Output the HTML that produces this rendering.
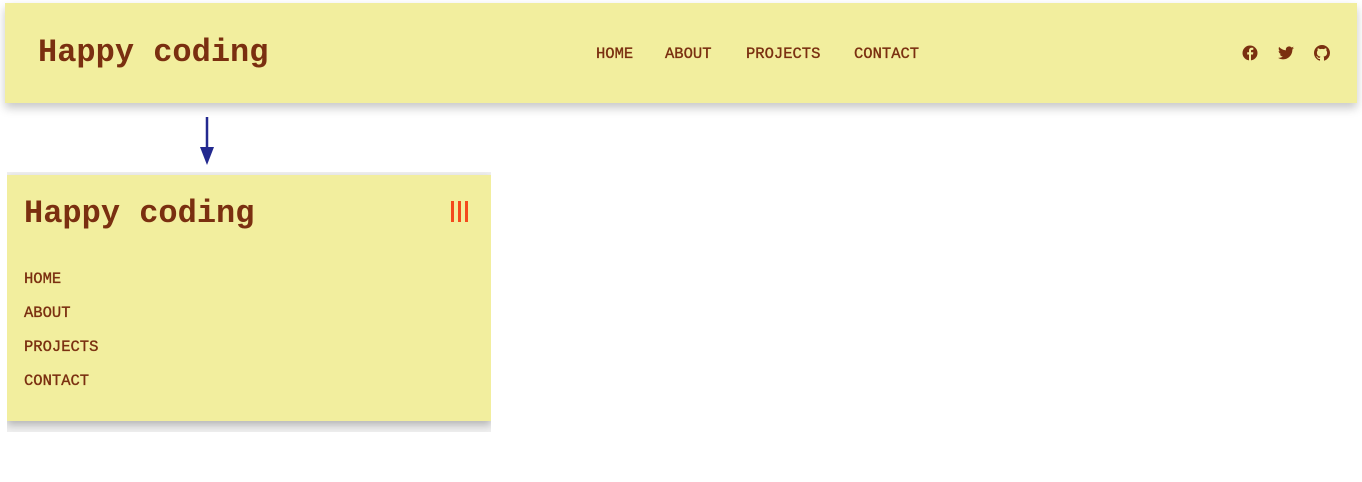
<!DOCTYPE html>
<html><head><meta charset="utf-8"><style>
body{margin:0;width:1362px;height:482px;background:#fff;position:relative;overflow:hidden;font-family:"Liberation Mono",monospace;color:#7a2f10}
.top{position:absolute;left:5px;top:3px;width:1352px;height:100px;background:#f2ee9e;box-shadow:0 5px 9px rgba(0,0,0,.22)}
.logo{position:absolute;font-weight:bold;font-size:32px;line-height:32px}
.nav{position:absolute;font-size:15.5px;-webkit-text-stroke:.35px #7a2f10;line-height:16px}
.wrap{position:absolute;left:7px;top:172px;width:484px;height:260px;background:#f0f0f0;overflow:hidden}
.panel{position:absolute;left:0;top:3px;width:484px;height:246px;background:#f2ee9e;box-shadow:0 4px 8px rgba(0,0,0,.25)}
.bar{position:absolute;top:201px;width:3px;height:21px;background:#f44a1c}
</style></head><body>
<div class="top">
<div class="logo" style="left:33px;top:34px">Happy coding</div>
<div class="nav" style="left:591px;top:43px">HOME</div>
<div class="nav" style="left:660px;top:43px">ABOUT</div>
<div class="nav" style="left:741px;top:43px">PROJECTS</div>
<div class="nav" style="left:849px;top:43px">CONTACT</div>
<svg style="position:absolute;left:1237px;top:42px" width="16" height="16" viewBox="0 0 16 16"><circle cx="8" cy="8" r="7.5" fill="#7a2f10"/><path d="M9 16V9.5h2l.3-2.3H9V6c0-.7.2-1.1 1.1-1.1h1.2V2.9C11 2.8 10.4 2.8 9.8 2.8 8.2 2.8 7 3.8 7 5.6v1.6H5.2v2.3H7V16z" fill="#f2ee9e"/></svg>
<svg style="position:absolute;left:1273px;top:43px" width="16" height="14" viewBox="0 0 24 20"><path d="M24 2.4c-.9.4-1.8.6-2.8.8 1-.6 1.8-1.6 2.2-2.7-1 .6-2 1-3.1 1.2A4.9 4.9 0 0 0 11.9 6C7.8 5.8 4.2 3.9 1.7.9c-1.3 2.300-.6 5.100 1.500 6.600-.8 0-1.600-.2-2.200-.6 0 2.400 1.700 4.400 3.900 4.800-.7.2-1.500.2-2.200.1.6 2 2.400 3.400 4.600 3.400A9.900 9.900 0 0 1 0 17.300 14 14 0 0 0 7.500 19.500c9.100 0 14-7.500 14-14v-.6c1-.7 1.800-1.600 2.500-2.500z" fill="#7a2f10"/></svg>
<svg style="position:absolute;left:1309px;top:42px" width="16" height="16" viewBox="0 0 16 16"><path fill="#7a2f10" d="M8 0C3.58 0 0 3.58 0 8c0 3.54 2.29 6.53 5.47 7.59.4.07.55-.17.55-.38v-1.33c-2.23.48-2.7-1.07-2.7-1.07-.36-.92-.89-1.17-.89-1.17-.73-.5.06-.49.06-.49.8.06 1.23.83 1.23.83.71 1.22 1.87.87 2.33.66.07-.52.28-.87.51-1.07-1.78-.2-3.64-.89-3.64-3.950 0-.87.31-1.590.82-2.150-.08-.2-.36-1.020.08-2.120 0 0 .67-.21 2.200.82A7.6 7.6 0 0 1 8 3.870c.68 0 1.360.09 2 .27 1.530-1.040 2.200-.82 2.200-.82.44 1.100.16 1.920.08 2.120.51.56.82 1.270.82 2.150 0 3.070-1.870 3.750-3.650 3.950.29.25.54.73.54 1.480v2.200c0 .21.15.46.55.38A8 8 0 0 0 16 8c0-4.420-3.580-8-8-8z"/></svg>
</div>
<svg style="position:absolute;left:198px;top:116px" width="18" height="50" viewBox="0 0 18 50"><line x1="9" y1="1" x2="9" y2="34" stroke="#23298f" stroke-width="2.5"/><path d="M2 31h14l-7 18z" fill="#23298f"/></svg>
<div class="wrap"><div class="panel">
<div class="logo" style="left:17px;top:23px">Happy coding</div>
<div class="nav" style="left:17px;top:96px">HOME</div>
<div class="nav" style="left:17px;top:130px">ABOUT</div>
<div class="nav" style="left:17px;top:164px">PROJECTS</div>
<div class="nav" style="left:17px;top:198px">CONTACT</div>
</div></div>
<div class="bar" style="left:451px"></div><div class="bar" style="left:458px"></div><div class="bar" style="left:465px"></div>
</body></html>
